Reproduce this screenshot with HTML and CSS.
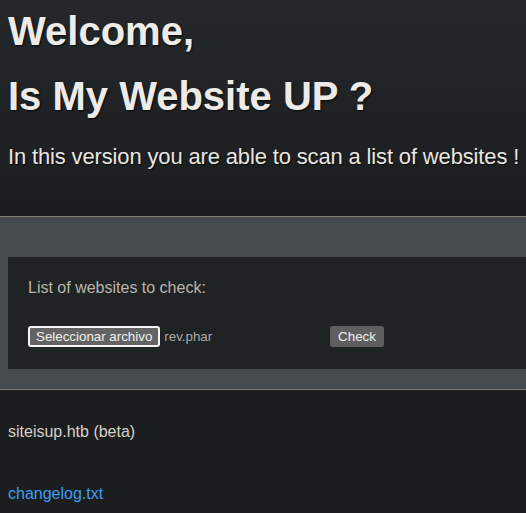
FILE: index.html
```html
<!DOCTYPE html>
<html lang="en">
<head>
<meta charset="utf-8">
<title>Is My Website UP ?</title>
<link rel="stylesheet" href="styles.css">
</head>
<body>
<header class="hero">
  <h1 class="title">Welcome,</h1>
  <h1 class="title title-second">Is My Website UP ?</h1>
  <p class="lead">In this version you are able to scan a list of websites !</p>
</header>
<section class="band">
  <form class="panel">
    <label class="panel-label">List of websites to check:</label>
    <div class="file-row">
      <span class="file-picker">
        <button type="button" class="file-btn">Seleccionar archivo</button>
        <span class="file-name">rev.phar</span>
      </span>
      <button type="button" class="check-btn">Check</button>
    </div>
  </form>
</section>
<footer class="foot">
  <p class="site">siteisup.htb (beta)</p>
  <a class="log" href="#">changelog.txt</a>
</footer>
</body>
</html>
```

FILE: styles.css
```css
html, body {
  margin: 0;
  padding: 0;
}
body {
  background: #1b1d1f;
  color: #e8e6e3;
  font-family: "Liberation Sans", Arial, Helvetica, sans-serif;
  overflow: hidden;
}
.hero {
  background: linear-gradient(to bottom, #25282b 0%, #1b1d1f 100%);
  padding: 3px 8px 0;
  height: 217px;
  box-sizing: border-box;
  border-bottom: 1px solid #807d75;
}
.title {
  margin: 0;
  font-size: 40px;
  font-weight: bold;
  line-height: 46px;
  color: #ecebe8;
  letter-spacing: 0;
  text-shadow: 1px 1px 2px rgba(0, 0, 0, 0.8);
}
.title:first-child {
  margin-top: 5px;
}
.title-second {
  margin-top: 19px;
}
.lead {
  margin: 25px 0 0;
  font-size: 22px;
  line-height: 26px;
  letter-spacing: -0.15px;
  white-space: nowrap;
  color: #e8e6e3;
  text-shadow: 1px 1px 1px rgba(0, 0, 0, 0.8);
}
.band {
  background: #464b4e;
  padding: 40px 0 20px 8px;
  border-bottom: 1px solid #807d75;
}
.panel {
  background: #202324;
  margin-right: -8px;
  padding: 22px 20px 22px;
  display: flex;
  flex-direction: column;
}
.panel-label {
  font-size: 16px;
  line-height: 18px;
  color: #b9b4ab;
}
.file-row {
  margin-top: 29px;
  display: flex;
  align-items: center;
  height: 21px;
}
.file-picker {
  display: flex;
  align-items: center;
  width: 302px;
}
.file-btn {
  box-sizing: border-box;
  height: 21px;
  padding: 0 6px;
  background: #636363;
  color: #f0f0f0;
  border: 2px solid #f4f4f4;
  border-radius: 3px;
  font-family: "Liberation Sans", Arial, sans-serif;
  font-size: 13.33px;
  line-height: 17px;
}
.file-name {
  margin-left: 4px;
  font-size: 13.33px;
  color: #a9a9a9;
}
.check-btn {
  box-sizing: border-box;
  height: 21px;
  width: 54px;
  padding: 0;
  background: #5f5f5f;
  color: #f0f0f0;
  border: none;
  border-radius: 3px;
  font-family: "Liberation Sans", Arial, sans-serif;
  font-size: 13.33px;
}
.foot {
  padding: 0 8px;
}
.site {
  margin: 33px 0 0;
  font-size: 16px;
  line-height: 18px;
  color: #d6d1c9;
}
.log {
  display: inline-block;
  margin-top: 44px;
  font-size: 16px;
  line-height: 18px;
  color: #3d9ef0;
  text-decoration: none;
}
```
